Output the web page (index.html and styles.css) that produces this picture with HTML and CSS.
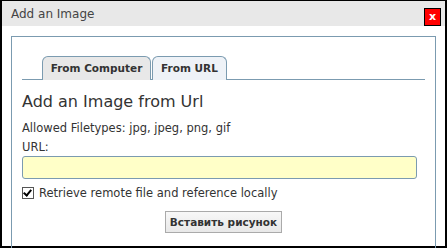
FILE: index.html
```html
<!DOCTYPE html>
<html lang="en">
<head>
    <meta charset="UTF-8">
    <title>Add an Image</title>
    <link rel="stylesheet" href="styles.css">
</head>
<body>
    <div class="dialog">
        <div class="dialog-title">
            <span>Add an Image</span>
            <button class="close-btn">x</button>
        </div>
        <div class="panel">
            <div class="tabs">
                <div class="tab">From Computer</div>
                <div class="tab active">From URL</div>
            </div>
            <h1>Add an Image from Url</h1>
            <p class="hint">Allowed Filetypes: jpg, jpeg, png, gif</p>
            <label class="field-label" for="url">URL:</label>
            <input type="text" id="url" class="url-input">
            <label class="check-row">
                <input type="checkbox" checked>
                <span>Retrieve remote file and reference locally</span>
            </label>
            <div class="actions">
                <button class="submit-btn">Вставить рисунок</button>
            </div>
        </div>
    </div>
</body>
</html>
```
FILE: styles.css
```css
:root {
    --panel-border: #7b9bb0;
    --text-color: #333;
}

body {
    margin: 0;
    font-family: 'DejaVu Sans', Verdana, sans-serif;
    color: var(--text-color);
    background: white;
}

.dialog {
    box-sizing: border-box;
    width: 447px;
    height: 248px;
    border: 2px solid black;
    border-top-width: 1px;
    background: white;
}

.dialog-title {
    height: 25px;
    background-color: #e8e8e8;
    display: flex;
    align-items: center;
    justify-content: space-between;
    padding: 0 4px 0 9px;
    font-size: 12px;
    color: #444;
}

.close-btn {
    width: 17px;
    height: 18px;
    margin-top: 6px;
    padding: 0;
    background: #ff0000;
    border: 1px solid black;
    color: white;
    font-family: 'DejaVu Sans', sans-serif;
    font-weight: bold;
    font-size: 11px;
    line-height: 14px;
}

.panel {
    margin: 10px 9px 0 9px;
    height: 199px;
    border: 1px solid var(--panel-border);
    padding: 19px 10px 0 10px;
}

.tabs {
    display: flex;
    gap: 1px;
    padding-left: 20px;
    border-bottom: 1px solid var(--panel-border);
    height: 23px;
}

.tab {
    width: 109px;
    box-sizing: border-box;
    height: 24px;
    border: 1px solid var(--panel-border);
    border-bottom: none;
    border-radius: 6px 6px 0 0;
    background-color: #e8e8e8;
    font-weight: bold;
    font-size: 10.5px;
    text-align: center;
    line-height: 23px;
}

.tab.active {
    width: 75px;
    background-color: #eef2f7;
}

h1 {
    margin: 12px 0 0 0;
    font-size: 16px;
    font-weight: normal;
    line-height: 20px;
}

.hint {
    margin: 9px 0 0 0;
    font-size: 11.5px;
    line-height: 14px;
}

.field-label {
    display: block;
    margin-top: 5px;
    font-size: 11.5px;
    line-height: 14px;
}

.url-input {
    display: block;
    box-sizing: border-box;
    width: 395px;
    height: 23px;
    margin-top: 2px;
    border: 1px solid var(--panel-border);
    border-radius: 3px;
    background-color: #ffffc8;
    outline: none;
}

.check-row {
    display: flex;
    align-items: center;
    gap: 5px;
    margin-top: 7px;
    font-size: 11.5px;
}

.check-row input {
    appearance: none;
    position: relative;
    width: 12px;
    height: 12px;
    margin: 0;
    border: 1px solid #555;
    background: white;
}

.check-row input:checked::after {
    content: "";
    position: absolute;
    left: 2px;
    top: 0;
    width: 3px;
    height: 6px;
    border: solid black;
    border-width: 0 2px 2px 0;
    transform: rotate(40deg);
}

.actions {
    display: flex;
    justify-content: center;
    margin-top: 11px;
}

.submit-btn {
    width: 117px;
    height: 22px;
    padding: 0;
    background: linear-gradient(#f8f8f8, #e8e8e8);
    border: 1px solid #aaa;
    font-family: 'DejaVu Sans', Verdana, sans-serif;
    font-weight: bold;
    font-size: 10.5px;
    color: var(--text-color);
}
```
